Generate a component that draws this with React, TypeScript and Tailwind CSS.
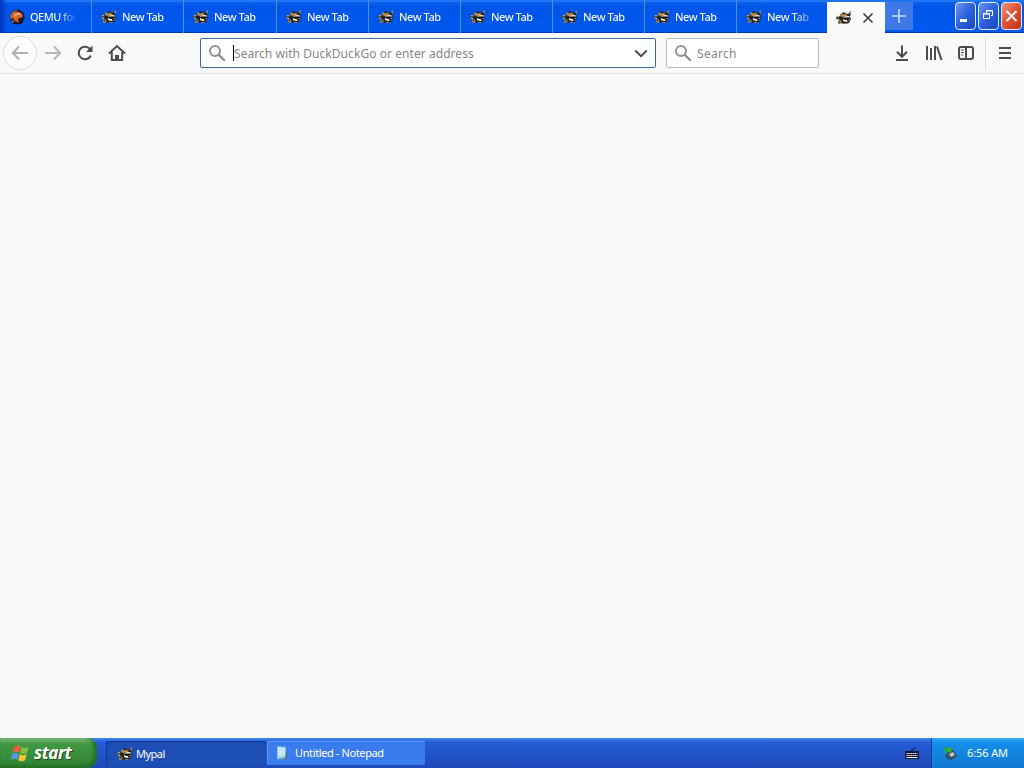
import type { ReactNode } from "react";

interface TabItem {
    title: string;
    width: string;
    faded?: boolean;
}

const tabs: TabItem[] = [
    { title: "New Tab", width: "w-[92px]" },
    { title: "New Tab", width: "w-[93px]" },
    { title: "New Tab", width: "w-[92px]" },
    { title: "New Tab", width: "w-[92px]" },
    { title: "New Tab", width: "w-[92px]" },
    { title: "New Tab", width: "w-[92px]" },
    { title: "New Tab", width: "w-[92px]" },
    { title: "New Tab", width: "w-[91px]", faded: true },
];

function RaccoonIcon() {
    return (
        <svg width="16" height="16" viewBox="0 0 16 16" className="shrink-0">
            <path d="M0 7l2-1 3 1v2l-2 1-3-1z" fill="#5c5648" />
            <path d="M1 6h2v1H1zM1 9h2v1H1z" fill="#b7a88a" />
            <path d="M4 5l2-1 1-2 2 1 3 1 2-2 1 1-1 4 1 2-2 4-4 1-5-1 1-2-2-2z" fill="#26231f" />
            <path d="M4 4l2-1 1 2-2 2-1-1zM13 2l2-1v3l-1 1z" fill="#94866a" />
            <path d="M6 5l3-1 3 1-2 1-4 1z" fill="#cf9648" />
            <path d="M7 7l3-1 3 0 1 1-1 1H8z" fill="#e8dcc4" />
            <path d="M8 7.5h5V9H8z" fill="#15120f" />
            <path d="M7 9l2 1 3 0 2-1-1 2-3 1-3-1z" fill="#f5f0e6" />
            <path d="M11 10h2v1h-2z" fill="#15120f" />
            <path d="M2 11l2-1 2 2-2 2H2zM8 13h4l-1 1H8z" fill="#8c7c60" />
            <path d="M3 11h1v1H3z" fill="#201c18" />
        </svg>
    );
}

function QemuIcon() {
    return (
        <svg width="16" height="16" viewBox="0 0 16 16" className="shrink-0">
            <circle cx="8" cy="8" r="7.5" fill="#211b20" />
            <path d="M1 6Q3 1 9 1L5 4 3 10 1 10z" fill="#7b6364" />
            <path d="M3 8C3 4 6 2 10 3c3 1 5 4 3 6-2-1-4 0-4 2l1 3-4-2z" fill="#e0642a" />
            <path d="M5 5l4-1 3 1-4 1-2 2z" fill="#f5a678" />
            <path d="M10 5h1v1h-1z" fill="#fff" />
            <path d="M2 11l2 1 2 2H4z" fill="#a7a2a6" />
            <path d="M3 14l3-1 4 1 4-3v2l-2 2H5z" fill="#11121b" />
        </svg>
    );
}

function SearchIcon() {
    return (
        <svg width="18" height="18" viewBox="0 0 18 18" fill="none" stroke="#8f8f91" className="shrink-0">
            <circle cx="7" cy="7" r="5" strokeWidth="2" />
            <path d="M10.8 10.8L16 16" strokeWidth="2.4" strokeLinecap="round" />
        </svg>
    );
}

function StrokeIcon({ children, className }: { children: ReactNode; className: string }) {
    return (
        <svg width="18" height="18" viewBox="0 0 18 18" fill="none" stroke="currentColor" strokeWidth="2" className={`shrink-0 ${className}`}>
            {children}
        </svg>
    );
}

function WindowButton({ tone, children }: { tone: "blue" | "red"; children: ReactNode }) {
    const fill =
        tone === "red"
            ? "bg-linear-to-br from-[#ee9279] via-[#dc5030] to-[#bd3516]"
            : "bg-linear-to-br from-[#6c96ee] via-[#2c5fdc] to-[#1749bd]";
    return (
        <button className={`h-[28px] w-[21px] shrink-0 rounded-[4px] border border-[#e4ecfc] ${fill}`}>
            <svg width="19" height="26" viewBox="0 0 19 26" fill="none" stroke="#fff">
                {children}
            </svg>
        </button>
    );
}

function TabStrip() {
    return (
        <div className="flex h-[33px] bg-linear-to-b from-[#1467ed] via-[#0054e9] via-20% to-[#0059ef] shadow-[inset_0_2px_0_#1c75f2,inset_0_-1px_0_#0038ae]">
            <div className="flex h-[33px] w-[91px] shrink-0 items-center bg-linear-to-r from-[#0036bd] to-transparent to-8% pl-[9px]">
                <QemuIcon />
                <span className="mt-[2px] ml-[5px] w-[47px] overflow-hidden bg-linear-to-r from-white from-60% to-transparent to-100% bg-clip-text text-[11px] font-medium tracking-[-0.55px] whitespace-nowrap text-transparent">
                    QEMU for
                </span>
            </div>
            {tabs.map((tab, index) => (
                <div
                    key={index}
                    className={`flex h-[33px] shrink-0 items-center border-l border-[#4a90f6] pl-[9px] ${tab.width}`}
                >
                    <RaccoonIcon />
                    <span
                        className={`mt-[2px] ml-[5px] bg-clip-text text-[11px] font-medium tracking-[-0.45px] whitespace-nowrap text-transparent ${
                            tab.faded ? "bg-linear-to-r from-white from-60% to-white/40" : "bg-white"
                        }`}
                    >
                        {tab.title}
                    </span>
                </div>
            ))}
            <div className="mt-[2px] flex h-[31px] w-[58px] shrink-0 items-center bg-[#fafafb] pl-[9px]">
                <RaccoonIcon />
                <svg width="12" height="12" viewBox="0 0 12 12" className="ml-[10px]" stroke="#3c3c3e" strokeWidth="1.6">
                    <path d="M1.5 1.5l9 9M10.5 1.5l-9 9" />
                </svg>
            </div>
            <button className="mt-[2px] flex h-[28px] w-[28px] shrink-0 items-center justify-center bg-[#3c78e6]">
                <svg width="14" height="14" viewBox="0 0 14 14" stroke="#cbdcfa" strokeWidth="1.6">
                    <path d="M7 0v14M0 7h14" />
                </svg>
            </button>
            <div className="mt-[2px] mr-[2px] ml-auto flex gap-[2px]">
                <WindowButton tone="blue">
                    <path d="M4 17.5h7" strokeWidth="3" />
                </WindowButton>
                <WindowButton tone="blue">
                    <path d="M7.5 10V7.5h6v5H12" />
                    <path d="M7 8h7" />
                    <path d="M4.5 10.5h6v5h-6z" />
                    <path d="M4 11h7" />
                </WindowButton>
                <WindowButton tone="red">
                    <path d="M4.5 8l10 10M14.5 8l-10 10" strokeWidth="2" />
                </WindowButton>
            </div>
        </div>
    );
}

function Toolbar() {
    return (
        <div className="flex h-[41px] items-center border-b border-[#e3e3e5] bg-[#f9f9fa]">
            <button className="ml-[3px] flex size-[34px] shrink-0 items-center justify-center rounded-full border border-[#dcdcdd] bg-[#fcfcfc]">
                <StrokeIcon className="text-[#b0b0b1]">
                    <path d="M17 9H2M8 2.5L1.8 9 8 15.5" />
                </StrokeIcon>
            </button>
            <StrokeIcon className="ml-[7px] text-[#b8b8b9]">
                <path d="M1 9h15M10 2.5L16.2 9 10 15.5" />
            </StrokeIcon>
            <StrokeIcon className="ml-[14px] text-[#4b4b4d]">
                <path d="M14.5 5.8A6.3 6.3 0 1 0 14.8 11.5" />
                <path d="M16.5 1.5v6.5H10z" fill="currentColor" stroke="none" />
            </StrokeIcon>
            <StrokeIcon className="ml-[14px] text-[#4b4b4d]">
                <path d="M1 9.5L9 2l8 7.5M3.8 8v8h10.4V8" />
                <path d="M7 16v-5h4v5z" fill="currentColor" stroke="none" />
            </StrokeIcon>

            {/* Address bar */}
            <div className="ml-[74px] flex h-[30px] w-[456px] shrink-0 items-center rounded-[2px] border border-[#3d6a9e] bg-white pl-[7px]">
                <SearchIcon />
                <div className="ml-[7px] h-4 w-px bg-black" />
                <span className="mt-[2px] text-[12px] tracking-[0.06px] whitespace-nowrap text-[#858587]">
                    Search with DuckDuckGo or enter address
                </span>
                <svg width="14" height="9" viewBox="0 0 14 9" className="mr-[7px] ml-auto" fill="none" stroke="#4b4b4d" strokeWidth="2">
                    <path d="M1.2 1.5L7 7.2l5.8-5.7" />
                </svg>
            </div>

            {/* Search box */}
            <div className="ml-[10px] flex h-[30px] w-[153px] shrink-0 items-center rounded-[2px] border border-[#bcbcbe] bg-white pl-[7px]">
                <SearchIcon />
                <span className="mt-[2px] ml-[5px] text-[12px] tracking-[0.3px] text-[#858587]">Search</span>
            </div>

            <StrokeIcon className="ml-[74px] text-[#4b4b4d]">
                <path d="M9 1.5v11M4 7.8l5 5 5-5M3 16h12" />
            </StrokeIcon>
            <StrokeIcon className="ml-[14px] text-[#4b4b4d]">
                <path d="M2 2v14M6 4v12M10 2v14M12 2.5L16.5 16" />
            </StrokeIcon>
            <StrokeIcon className="ml-[14px] text-[#4b4b4d]">
                <rect x="2" y="3" width="14" height="12" rx="2" />
                <path d="M9 3v12" />
                <path d="M4 6h3M4 8.5h3M4 11h2" strokeWidth="1" />
            </StrokeIcon>
            <div className="ml-[10px] h-[35px] w-px bg-[#dedee0]" />
            <StrokeIcon className="ml-[10px] text-[#4b4b4d]">
                <path d="M3 4h12M3 9h12M3 14h12" />
            </StrokeIcon>
        </div>
    );
}

function WindowsFlag() {
    return (
        <svg width="20" height="20" viewBox="0 0 20 20" className="shrink-0">
            <path d="M4 4Q7 1.5 10.5 3.5L9 9.5Q5.5 7.8 2.5 9.5z" fill="#e9603a" />
            <path d="M11.5 4Q15 6 18.5 4L17 10Q13.5 12 10 10z" fill="#82c045" />
            <path d="M2.2 10.7Q5.5 9 8.7 10.7L7.2 16.7Q4 15 .8 16.7z" fill="#5a92ec" />
            <path d="M9.7 11.3Q13 13 16.7 11.3L15 17.3Q11.5 19 8.2 17.3z" fill="#f5c736" />
        </svg>
    );
}

function Taskbar() {
    return (
        <div className="flex h-[30px] bg-linear-to-b from-[#3f86ee] via-[#265cd8] via-15% to-[#1d48b8] to-100%">
            <button className="flex h-[30px] w-[97px] shrink-0 items-center rounded-r-[10px] bg-linear-to-b from-[#7db87a] via-[#419844] via-20% to-[#2f8330] pl-[10px] shadow-[inset_-3px_-2px_4px_#246b25]">
                <WindowsFlag />
                <span className="mb-px ml-[4px] text-[17px] leading-none font-bold tracking-[-0.4px] text-white italic [text-shadow:1px_1px_1px_#1c4d1c]">
                    start
                </span>
            </button>
            <div className="mt-[3px] ml-[9px] flex h-[25px] w-[160px] shrink-0 items-center rounded-[2px] bg-[#1c4eb6] pl-[11px] shadow-[inset_1px_1px_1px_#12388a]">
                <RaccoonIcon />
                <span className="mt-px ml-[3px] text-[11px] tracking-[-0.5px] text-white">Mypal</span>
            </div>
            <div className="mt-[3px] ml-[1px] flex h-[24px] w-[158px] shrink-0 items-center rounded-[2px] bg-[#3a7bee] pl-[7px] shadow-[inset_1px_1px_0_#5c97f5]">
                <svg width="16" height="16" viewBox="0 0 16 16">
                    <path d="M3 1l9 1 1 11-2 2-8-1z" fill="#8ccbe6" />
                    <path d="M4 2l7 1 1 8-8 1z" fill="#c3eaf4" />
                    <path d="M12 3l2 10-3 2-7-1 7-1z" fill="#417f9e" />
                </svg>
                <span className="ml-[5px] text-[11px] tracking-[-0.38px] whitespace-nowrap text-white">Untitled - Notepad</span>
            </div>
            <svg width="14" height="14" viewBox="0 0 14 14" className="mt-[9px] mr-[12px] ml-auto">
                <path d="M7 4V2h3V0" fill="none" stroke="#10245e" />
                <rect y="4" width="14" height="8" fill="#10173a" />
                <path d="M1.5 6.5h11M1.5 8.5h11" stroke="#fff" strokeDasharray="1.4 .6" />
                <path d="M1.5 10.5h11" stroke="#fff" />
            </svg>
            <div className="flex h-[30px] w-[93px] shrink-0 items-center border-l border-[#0c3da0] bg-linear-to-b from-[#36adf5] via-[#158ee9] via-15% to-[#1179d2] pl-[10px]">
                <svg width="16" height="16" viewBox="0 0 16 16">
                    <path d="M4 8l7-3 4 6-6 4z" fill="#3e4b50" />
                    <path d="M7 9l4-2 2 3-4 2z" fill="#bac9c6" />
                    <path d="M2 2l8 1-1 5-3-1-3 1z" fill="#2cab3c" />
                    <path d="M4 9l3 4 2 1-2 1-4-4z" fill="#27465a" />
                </svg>
                <span className="ml-[9px] text-[11px] tracking-[-0.1px] whitespace-nowrap text-white">6:56 AM</span>
            </div>
        </div>
    );
}

export default function App() {
    return (
        <div className="flex h-[768px] w-[1024px] flex-col overflow-hidden bg-[#f9f9fa] font-['Noto_Sans',sans-serif]">
            <TabStrip />
            <Toolbar />
            <main className="flex-1 bg-[#f9f9f9]" />
            <Taskbar />
        </div>
    );
}
